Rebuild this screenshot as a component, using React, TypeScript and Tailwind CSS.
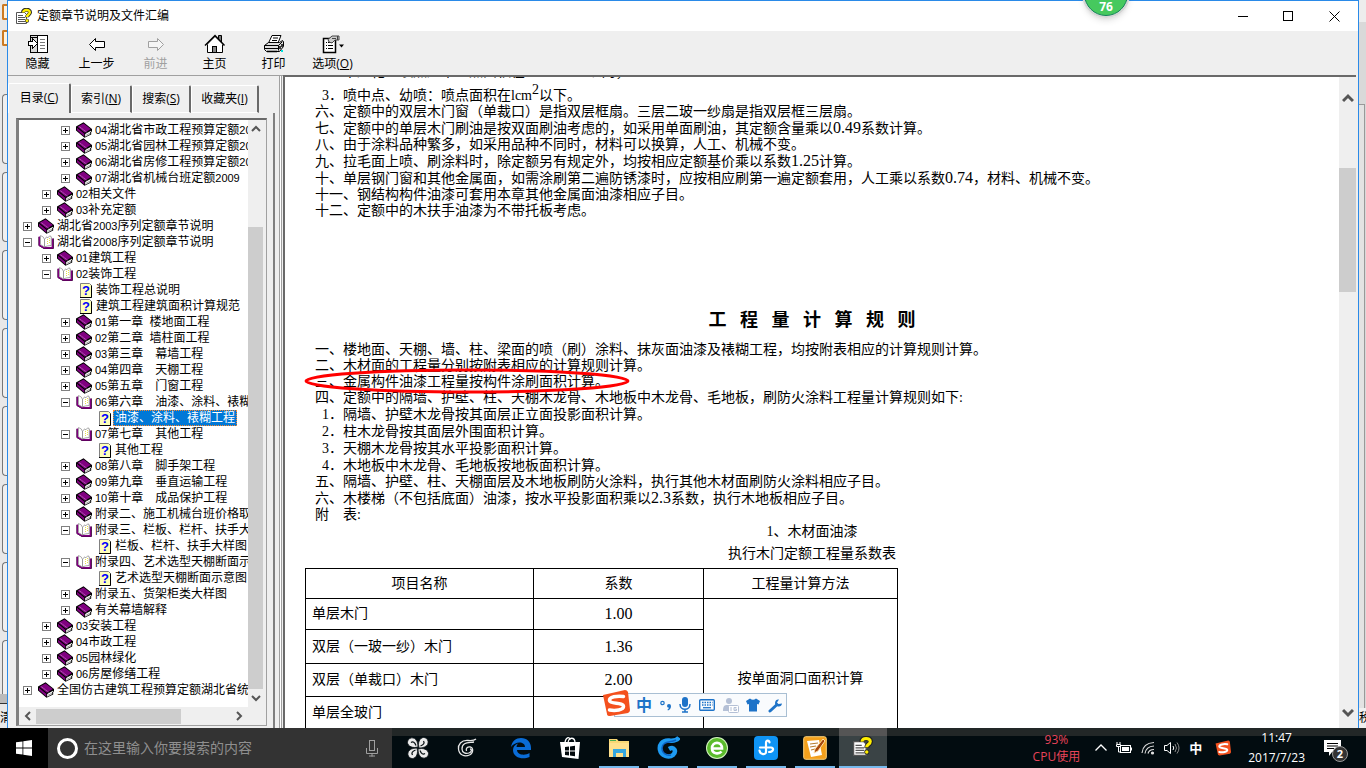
import React from "react";
import clsx from "clsx";

type NodeKind = "closed" | "open" | "page";

interface TreeNode {
  level: number;
  kind: NodeKind;
  label: string;
  selected?: boolean;
}

interface DocLine {
  text: string;
  tall?: boolean;
  sub?: boolean;
}

const tree: TreeNode[] = [
  { level: 2, kind: "closed", label: "04湖北省市政工程预算定额2008" },
  { level: 2, kind: "closed", label: "05湖北省园林工程预算定额2008" },
  { level: 2, kind: "closed", label: "06湖北省房修工程预算定额2008" },
  { level: 2, kind: "closed", label: "07湖北省机械台班定额2009" },
  { level: 1, kind: "closed", label: "02相关文件" },
  { level: 1, kind: "closed", label: "03补充定额" },
  { level: 0, kind: "closed", label: "湖北省2003序列定额章节说明" },
  { level: 0, kind: "open", label: "湖北省2008序列定额章节说明" },
  { level: 1, kind: "closed", label: "01建筑工程" },
  { level: 1, kind: "open", label: "02装饰工程" },
  { level: 2, kind: "page", label: "装饰工程总说明" },
  { level: 2, kind: "page", label: "建筑工程建筑面积计算规范" },
  { level: 2, kind: "closed", label: "01第一章\u00a0\u00a0楼地面工程" },
  { level: 2, kind: "closed", label: "02第二章\u00a0\u00a0墙柱面工程" },
  { level: 2, kind: "closed", label: "03第三章　幕墙工程" },
  { level: 2, kind: "closed", label: "04第四章　天棚工程" },
  { level: 2, kind: "closed", label: "05第五章　门窗工程" },
  { level: 2, kind: "open", label: "06第六章　油漆、涂料、裱糊工程" },
  { level: 3, kind: "page", label: "油漆、涂料、裱糊工程", selected: true },
  { level: 2, kind: "open", label: "07第七章　其他工程" },
  { level: 3, kind: "page", label: "其他工程" },
  { level: 2, kind: "closed", label: "08第八章　脚手架工程" },
  { level: 2, kind: "closed", label: "09第九章　垂直运输工程" },
  { level: 2, kind: "closed", label: "10第十章　成品保护工程" },
  { level: 2, kind: "closed", label: "附录二、施工机械台班价格取定表" },
  { level: 2, kind: "open", label: "附录三、栏板、栏杆、扶手大样图" },
  { level: 3, kind: "page", label: "栏板、栏杆、扶手大样图" },
  { level: 2, kind: "open", label: "附录四、艺术选型天棚断面示意图" },
  { level: 3, kind: "page", label: "艺术选型天棚断面示意图" },
  { level: 2, kind: "closed", label: "附录五、货架柜类大样图" },
  { level: 2, kind: "closed", label: "有关幕墙解释" },
  { level: 1, kind: "closed", label: "03安装工程" },
  { level: 1, kind: "closed", label: "04市政工程" },
  { level: 1, kind: "closed", label: "05园林绿化" },
  { level: 1, kind: "closed", label: "06房屋修缮工程" },
  { level: 0, kind: "closed", label: "全国仿古建筑工程预算定额湖北省统一基价表" },
];

const folderIndent = ["pl-1", "pl-[23px]", "pl-[42px]"];
const pageIndent = ["pl-[23px]", "pl-[42px]", "pl-[61px]", "pl-[80px]"];

const notes: DocLine[] = [
  { text: "3．喷中点、幼喷：喷点面积在lcm^以下。", tall: true, sub: true },
  { text: "六、定额中的双层木门窗（单裁口）是指双层框扇。三层二玻一纱扇是指双层框三层扇。" },
  { text: "七、定额中的单层木门刷油是按双面刷油考虑的，如采用单面刷油，其定额含量乘以0.49系数计算。", tall: true },
  { text: "八、由于涂料品种繁多，如采用品种不同时，材料可以换算，人工、机械不变。" },
  { text: "九、拉毛面上喷、刷涂料时，除定额另有规定外，均按相应定额基价乘以系数1.25计算。", tall: true },
  { text: "十、单层钢门窗和其他金属面，如需涂刷第二遍防锈漆时，应按相应刷第一遍定额套用，人工乘以系数0.74，材料、机械不变。", tall: true },
  { text: "十一、钢结构构件油漆可套用本章其他金属面油漆相应子目。" },
  { text: "十二、定额中的木扶手油漆为不带托板考虑。" },
];

const rulesBefore: DocLine[] = [
  { text: "一、楼地面、天棚、墙、柱、梁面的喷（刷）涂料、抹灰面油漆及裱糊工程，均按附表相应的计算规则计算。" },
  { text: "二、木材面的工程量分别按附表相应的计算规则计算。" },
];

const rulesAfter: DocLine[] = [
  { text: "四、定额中的隔墙、护壁、柱、天棚木龙骨、木地板中木龙骨、毛地板，刷防火涂料工程量计算规则如下:" },
  { text: "1．隔墙、护壁木龙骨按其面层正立面投影面积计算。", tall: true, sub: true },
  { text: "2．柱木龙骨按其面层外围面积计算。", tall: true, sub: true },
  { text: "3．天棚木龙骨按其水平投影面积计算。", tall: true, sub: true },
  { text: "4．木地板中木龙骨、毛地板按地板面积计算。", tall: true, sub: true },
  { text: "五、隔墙、护壁、柱、天棚面层及木地板刷防火涂料，执行其他木材面刷防火涂料相应子目。" },
  { text: "六、木楼梯（不包括底面）油漆，按水平投影面积乘以2.3系数，执行木地板相应子目。", tall: true },
  { text: "附　表:" },
];

const ClosedBook = () => (
  <svg width="16" height="16" viewBox="0 0 16 16" className="shrink-0">
    <path d="M0 4.500 7.500.3 16 7v2.200l-.8.800v2.400L8.500 15.700 0 8.500Z" fill="#000" />
    <path d="M1.500 4.700 7.500 1.400 14.800 7 8.800 10.800Z" fill="#800080" />
    <path d="M1 5.800l7.300 6v2.700L1 8.200Z" fill="#800080" />
    <path d="M9.200 12 15 8.700v.8l-1 .9.300 1.600-5.100 2.700Z" fill="#fff" />
    <path d="M10 13.300l4-2.200" stroke="#888" strokeWidth=".8" fill="none" />
    <path d="M3.500 4.800l7 5.300" stroke="#d8a0d8" strokeWidth=".8" strokeDasharray="1.500 1" fill="none" />
  </svg>
);

const OpenBook = () => (
  <svg width="16" height="16" viewBox="0 0 16 16" className="shrink-0">
    <path d="M1 3v8.500L6 14.500h9.300V4.500" fill="none" stroke="#000" strokeWidth="1" />
    <path d="M1.500 2.500v8.700l4.800 2.600h8.200V4.500" fill="none" stroke="#800080" strokeWidth="1.800" />
    <path d="M2.500 1.500q3.500 1 4 4v7.500l-4-2.500Z" fill="#fff" stroke="#999" strokeWidth=".8" />
    <path d="M6.500 12.800V5l2.300-2 1 .8 2-2 1.500 1v8.700l-3.500.4Z" fill="#fff" stroke="#888" strokeWidth=".8" />
    <path d="M9.500 5v6M11.500 4v6" stroke="#e8e04a" strokeWidth="1" strokeDasharray="1 1" />
  </svg>
);

const HelpPage = () => (
  <svg width="12" height="15" viewBox="0 0 12 15" className="shrink-0">
    <path d="M.5.5h9l2 2v12H.5Z" fill="#ffffb8" stroke="#808080" />
    <path d="M11.500 2.500v12H0" fill="none" stroke="#000" />
    <text x="6" y="12" textAnchor="middle" fontSize="13" fontWeight="700" fill="#0000ff" fontFamily="Liberation Sans, sans-serif">?</text>
  </svg>
);

const Expander = ({ open }: { open: boolean }) => (
  <svg width="9" height="9" viewBox="0 0 9 9" shapeRendering="crispEdges" className="mr-1 shrink-0">
    <rect x=".5" y=".5" width="8" height="8" fill="#fff" stroke="#808080" />
    <path d={open ? "M2 4.500h5" : "M2 4.500h5M4.500 2v5"} stroke="#000" />
  </svg>
);

const HelpFile = ({ size }: { size: number }) => (
  <svg width={size} height={size} viewBox="0 0 16 16" className="shrink-0">
    <path d="M.5 4.500h8l2 2v9H.5Z" fill="#fff" stroke="#555" />
    <path d="M2 7.500h5M2 9.500h7M2 11.500h7M2 13.500h7" stroke="#555" />
    <path d="M7 4.500C7 1 14 .8 14 4.300c0 2.500-3 2.400-3 5" fill="none" stroke="#222" strokeWidth="4" />
    <path d="M7.300 4.500C7 1.300 13.700 1 13.800 4.300c0 2.500-2.900 2.400-2.900 4.600" fill="none" stroke="#ffee00" strokeWidth="2.500" />
    <circle cx="11" cy="12.700" r="2" fill="#222" />
    <circle cx="11" cy="12.700" r="1.400" fill="#ffee00" />
  </svg>
);

const Chevron = ({ dir }: { dir: "up" | "down" | "left" | "right" }) => {
  const d = {
    up: "M1 7l4-4 4 4",
    down: "M1 3l4 4 4-4",
    left: "M7 1 3 5l4 4",
    right: "M3 1l4 4-4 4",
  }[dir];
  return (
    <svg width="10" height="10" viewBox="0 0 10 10" fill="none" stroke="#555" strokeWidth="2" className="shrink-0">
      <path d={d} />
    </svg>
  );
};

const toolbar = [
  {
    label: "隐藏",
    icon: (
      <g shapeRendering="crispEdges">
        <rect x="3.500" y="1.500" width="17" height="17" fill="#fff" stroke="#000" />
        <path d="M4 2h6v16H4Z" fill="#d8d8d8" />
        <path d="M10.500 2v16M4 3.500h6" stroke="#000" />
        <path d="M13 5.500h5M13 8.500h5M13 11.500h5M13 14.500h5" stroke="#777" />
        <path d="M1.500 7.500h4v-3l5 5-5 5v-3h-4Z" fill="#fff" stroke="#000" />
      </g>
    ),
  },
  {
    label: "上一步",
    icon: <path d="M3.500 10.500l6-6v3h9v6h-9v3Z" fill="#fff" stroke="#000" />,
  },
  {
    label: "前进",
    disabled: true,
    icon: <path d="M18.500 10.500l-6-6v3h-9v6h9v3Z" fill="#f6f6f6" stroke="#a0a0a0" />,
  },
  {
    label: "主页",
    icon: (
      <g>
        <path d="M14.500 5V1.500h3V8" fill="#777" stroke="#000" />
        <path d="M3.500 10v8.500h15V10L11 2Z" fill="#fff" stroke="#000" />
        <path d="M1 11.500 11 1.500l9.500 10" fill="none" stroke="#000" strokeWidth="1.500" />
        <path d="M3.500 10.500 11 3l7.500 7.500" fill="none" stroke="#888" />
        <rect x="8.500" y="12.500" width="4" height="6" fill="#888" stroke="#000" />
      </g>
    ),
  },
  {
    label: "打印",
    icon: (
      <g>
        <path d="M5.500 9 9 1.500h9L15 9Z" fill="#fff" stroke="#000" />
        <path d="M10 4h5M9 6.500h5" stroke="#000" />
        <path d="M1.500 11.500l4-3h11l3-2 1 1v5l-4 5h-13l-2-2Z" fill="#ddd" stroke="#000" />
        <path d="M1.500 11.500h14v5M15.500 11.500l4-4M2 14.500h13" fill="none" stroke="#000" />
        <path d="M4 17.500h10M17 12v3M19 10v3" stroke="#000" strokeWidth="1.500" />
        <path d="M18 17h2" stroke="#00e0e0" strokeWidth="2" />
      </g>
    ),
  },
  {
    label: "选项",
    hotkey: "O",
    icon: (
      <g>
        <rect x="1.500" y="4.500" width="12" height="14" fill="#fff" stroke="#000" strokeWidth="1.500" />
        <path d="M4 8.500h1M6 8.500h5M4 11.500h1M6 11.500h5M4 14.500h1M6 14.500h5" stroke="#000" />
        <path d="M6 5.500 10 2h7v4h-4l-3 3-3-1Z" fill="#ccc" stroke="#444" />
        <path d="M10 4.500h4M15.500 2v4" stroke="#444" />
        <path d="M17 10.500h5l-2.500 3Z" fill="#000" />
      </g>
    ),
  },
];

// Decimals are set a little larger than the body, "^" stands for a raised 2
const withNumbers = (text: string) =>
  text.split(/(\d\.\d+|\^)/).map((part, i) => {
    if (part === "^") {
      return (
        <span key={i} className="inline-block -translate-y-1.5">
          2
        </span>
      );
    }
    if (/^\d\.\d+$/.test(part)) {
      return (
        <span key={i} className="text-base leading-none">
          {part}
        </span>
      );
    }
    return part;
  });

const Lines = ({ lines }: { lines: DocLine[] }) => (
  <>
    {lines.map((line, i) => (
      <p
        key={i}
        className={clsx("whitespace-nowrap", line.tall ? "h-[17px] leading-[17px]" : "h-4 leading-4", line.sub && "pl-[7px]")}
      >
        {withNumbers(line.text)}
      </p>
    ))}
  </>
);

const TitleBar = () => (
  <header className="flex h-[30px] shrink-0 items-center bg-white pl-2">
    <HelpFile size={16} />
    <h1 className="ml-[5px] flex-1 text-xs">定额章节说明及文件汇编</h1>
    <button aria-label="最小化" className="flex h-full w-[45px] items-center justify-center">
      <span className="h-px w-2.5 bg-black" />
    </button>
    <button aria-label="最大化" className="flex h-full w-[45px] items-center justify-center">
      <span className="size-2.5 border border-black" />
    </button>
    <button aria-label="关闭" className="flex h-full w-12 items-center justify-center">
      <svg width="11" height="11" viewBox="0 0 11 11" stroke="#000">
        <path d="M.5.5l10 10M10.500.5l-10 10" />
      </svg>
    </button>
  </header>
);

const Toolbar = () => (
  <nav className="flex h-11 shrink-0 bg-[#efefef]">
    {toolbar.map((item) => (
      <button
        key={item.label}
        disabled={item.disabled}
        className={clsx("flex w-[59px] flex-col items-center pt-[3px] text-xs leading-[18px]", item.disabled && "text-[#a0a0a0]")}
      >
        <svg width="22" height="20" viewBox="0 0 22 20" className="mb-px shrink-0">
          {item.icon}
        </svg>
        <span className="whitespace-nowrap">
          {item.label}
          {item.hotkey && (
            <>
              (<u>{item.hotkey}</u>)
            </>
          )}
        </span>
      </button>
    ))}
  </nav>
);

const Tab = ({ label, hotkey, active, width }: { label: string; hotkey: string; active?: boolean; width: string }) => (
  <button
    role="tab"
    aria-selected={!!active}
    className={clsx(
      "rounded-t-xs border-t border-r-2 border-l border-t-white border-r-[#696969] border-l-white text-xs whitespace-nowrap",
      width,
      active ? "h-[30px] pb-0.5" : "h-7 border-b border-b-white"
    )}
  >
    {label}(<u>{hotkey}</u>)
  </button>
);

const TreeItem = ({ node }: { node: TreeNode }) => {
  const isPage = node.kind === "page";
  return (
    <li className={clsx("flex h-4 items-center gap-0.5", isPage ? pageIndent[node.level] : folderIndent[node.level])}>
      {!isPage && <Expander open={node.kind === "open"} />}
      {node.kind === "closed" && <ClosedBook />}
      {node.kind === "open" && <OpenBook />}
      {isPage && <HelpPage />}
      <button
        className={clsx(
          "h-4 shrink-0 border text-xs leading-[14px] whitespace-nowrap",
          isPage ? "px-px" : "pr-px",
          node.selected ? "border-dotted border-[#ff8728] bg-[#0078d7] text-white" : "border-transparent"
        )}
      >
        {node.label.split(/(\d+)/).map((part, i) =>
          /^\d+$/.test(part) ? (
            <span key={i} className="font-['Liberation_Sans',sans-serif] text-[11px]">
              {part}
            </span>
          ) : (
            part
          )
        )}
      </button>
    </li>
  );
};

const Sidebar = () => (
  <aside className="flex w-[271px] shrink-0 flex-col bg-[#efefef] pt-[7px]">
    <div role="tablist" className="flex items-end">
      <Tab label="目录" hotkey="C" active width="w-[63px]" />
      <Tab label="索引" hotkey="N" width="w-[61px]" />
      <Tab label="搜索" hotkey="S" width="w-[59px]" />
      <Tab label="收藏夹" hotkey="I" width="w-[68px]" />
    </div>
    <div className="mr-1 flex min-h-0 flex-1 border-r-2 border-[#808080] pt-[5px] pr-1.5 pb-0.5 pl-2">
      <div className="flex min-h-0 min-w-0 flex-1 flex-col border-t-2 border-r border-b border-l-3 border-t-[#696969] border-r-[#a0a0a0] border-b-[#a0a0a0] border-l-[#808080] bg-white">
        <div className="flex min-h-0 min-w-0 flex-1">
          <ul className="min-w-0 flex-1 overflow-hidden pt-0.5">
            {tree.map((node) => (
              <TreeItem key={node.level + node.label} node={node} />
            ))}
          </ul>
          <div className="flex w-[15px] shrink-0 flex-col items-center bg-[#efefef]">
            <div className="pt-1">
              <Chevron dir="up" />
            </div>
            <div className="mt-[93px] min-h-0 w-full flex-1 bg-[#cdcdcd]" />
            <div className="py-1">
              <Chevron dir="down" />
            </div>
          </div>
          <div className="w-[3px] shrink-0 bg-[#efefef]" />
        </div>
        <div className="flex h-[18px] shrink-0 items-center bg-[#efefef] pr-[22px] pl-1">
          <Chevron dir="left" />
          <div className="ml-[3px] h-[15px] w-[145px] bg-[#cdcdcd]" />
          <div className="flex-1" />
          <Chevron dir="right" />
        </div>
      </div>
    </div>
  </aside>
);

const cell = "border border-black px-1.5 font-normal";
const numberCell = "border border-black px-1.5 text-center text-base leading-4";

const CoefficientTable = () => (
  <table className="mt-[5px] ml-5 w-[592px] table-fixed border-collapse leading-4">
    <colgroup>
      <col className="w-[228px]" />
      <col className="w-[170px]" />
      <col className="w-[194px]" />
    </colgroup>
    <thead>
      <tr className="h-[30px]">
        <th className={cell}>项目名称</th>
        <th className={cell}>系数</th>
        <th className={cell}>工程量计算方法</th>
      </tr>
    </thead>
    <tbody>
      <tr className="h-[31px]">
        <td className={cell}>单层木门</td>
        <td className={numberCell}>1.00</td>
        <td className={clsx(cell, "text-center")} rowSpan={5}>
          按单面洞口面积计算
        </td>
      </tr>
      <tr className="h-[34px]">
        <td className={cell}>双层（一玻一纱）木门</td>
        <td className={numberCell}>1.36</td>
      </tr>
      <tr className="h-[33px]">
        <td className={cell}>双层（单裁口）木门</td>
        <td className={numberCell}>2.00</td>
      </tr>
      <tr className="h-8">
        <td className={cell}>单层全玻门</td>
        <td className={cell} />
      </tr>
      <tr className="h-[30px]">
        <td className={cell} />
        <td className={cell} />
      </tr>
    </tbody>
  </table>
);

const Article = () => (
  <article className="min-w-0 flex-1 overflow-hidden bg-white font-['Liberation_Serif','Noto_Sans_CJK_SC',serif] text-sm">
    <div className="mb-[7px] flex h-[3px] items-end overflow-hidden pl-[37px]">
      <p className="h-4 shrink-0 leading-4 whitespace-nowrap">2．中压花：喷点压平、点面积在1～1.2cm2以内；</p>
    </div>
    <section className="pl-[30px]">
      <Lines lines={notes} />
    </section>
    <h2 className="mt-[89px] mb-[10px] text-center text-lg leading-6 font-bold">
      {"工程量计算规则".split("").join("\u00a0\u00a0\u00a0")}
    </h2>
    <section className="pl-[30px]">
      <Lines lines={rulesBefore} />
      <div className="relative">
        <Lines lines={[{ text: "三、金属构件油漆工程量按构件涂刷面积计算。" }]} />
        <svg width="328" height="26" viewBox="0 0 328 26" className="absolute -top-1.5 -left-3">
          <ellipse cx="164" cy="13" rx="161" ry="11" fill="none" stroke="#f00" strokeWidth="3" />
        </svg>
      </div>
      <Lines lines={rulesAfter} />
    </section>
    <p className="text-center leading-[18px]">1、木材面油漆</p>
    <p className="mt-1 text-center leading-[18px]">执行木门定额工程量系数表</p>
    <CoefficientTable />
  </article>
);

const SogouMark = ({ size }: { size: number }) => (
  <svg width={size} height={size} viewBox="0 0 28 28" className="shrink-0">
    <path d="M1 6 23 1q2 0 3 2l2 18q0 2-2 3L8 27q-3 0-3-2Z" fill="#f4511e" />
    <path d="M21.500 7.500C15 6.500 7 8 7.500 11.500c.5 4 14 1.500 14 6 0 3.500-8 4.500-14 3.500" fill="none" stroke="#fff" strokeWidth="3.500" strokeLinecap="round" />
  </svg>
);

const ImeBar = () => (
  <div className="absolute bottom-[51px] left-[602px] flex h-6 w-[185px] items-center">
    <div className="absolute inset-y-0 right-0 left-3 border border-[#a9bfd3] bg-[#f9fbfd]" />
    <div className="relative -mt-1 flex">
      <SogouMark size={28} />
    </div>
    <div className="relative flex flex-1 items-center justify-between pr-1 pl-1.5 text-[#1e73c8]">
      <span className="text-base leading-5 font-bold">中</span>
      <svg width="12" height="14" viewBox="0 0 12 14">
        <circle cx="2.500" cy="5" r="1.700" fill="none" stroke="currentColor" strokeWidth="1.200" />
        <path d="M7 8a2 2 0 1 1 4 0q0 3-3 4.500l-.6-.8q1.400-.9 1.500-2Q7 9.500 7 8Z" fill="currentColor" />
      </svg>
      <svg width="12" height="16" viewBox="0 0 12 16">
        <rect x="3" y="0" width="6" height="10" rx="3" fill="currentColor" />
        <path d="M1 7c0 7 10 7 10 0M6 12v3M3 15h6" fill="none" stroke="currentColor" strokeWidth="1.500" />
      </svg>
      <svg width="16" height="12" viewBox="0 0 16 12">
        <rect x=".7" y=".7" width="14.600" height="10.600" rx="1" fill="none" stroke="currentColor" strokeWidth="1.400" />
        <path d="M3 3.500h10.500M3 6h10.500" stroke="currentColor" strokeWidth="1.300" strokeDasharray="1.500 1" />
        <path d="M4 8.700h8" stroke="currentColor" strokeWidth="1.300" />
      </svg>
      <svg width="16" height="16" viewBox="0 0 16 16">
        <circle cx="6" cy="4" r="3" fill="#b4c0d6" />
        <path d="M0 14c0-7 3-6 6-6s4 1 4 6Z" fill="#b4c0d6" />
        <rect x="5.500" y="8.500" width="10" height="7" rx="1" fill="#fff" stroke="#b4c0d6" />
        <path d="M8 10v4M13.500 10.500h-2.500v3h2.500v-1.500h-2" fill="none" stroke="#b4c0d6" />
      </svg>
      <svg width="14" height="14" viewBox="0 0 14 14">
        <path d="M0 3 4 .5q3 2.500 6 0L14 3l-1.500 3.500L11 6v7.500H3V6l-1.500.5Z" fill="currentColor" />
      </svg>
      <svg width="15" height="15" viewBox="0 0 15 15">
        <path d="M2 13 8 7.500" stroke="currentColor" strokeWidth="3" strokeLinecap="round" />
        <path d="M11 1.500a3.500 3.500 0 1 0 3 4L10.500 6 9 4.500Z" fill="currentColor" />
      </svg>
    </div>
  </div>
);

const taskIcons = [
  {
    name: "搜狗",
    icon: (
      <g fill="#ececec" stroke="#0a1215" strokeWidth=".8">
        <path d="M12 11C12 2 6 0 2.500 3.500c-3 4 1 8 6 8Z" />
        <path d="M13 12C22 12 24 6 20.500 2.500c-4-3-8 1-8 6Z" />
        <path d="M12 13c0 9 6 11 9.500 7.500 3-4-1-8-6-8Z" />
        <path d="M11 12C2 12 0 18 3.500 21.500c4 3 8-1 8-6Z" />
        <path d="M5 6.500q3-2 5 3M17.500 5q2 3-3 5M19 17.500q-3 2-5-3M6.500 19q-2-3 3-5" fill="none" strokeWidth="1.300" />
      </g>
    ),
  },
  {
    name: "GLodon",
    icon: (
      <g fill="none" stroke="#e6e6e6" strokeWidth="1.300">
        <path d="M21 3q-2 2-8 1.500C6 4 3 9 3.500 13c.5 6 6 8 11 6 4-2 4-7 1-8-3-.5-5 1-4 4" />
        <path d="M19 6c-6 1-12 0-12 7 0 4 4 5 7 4 3-1 3-4 1-4" />
      </g>
    ),
  },
  {
    name: "Edge",
    gap: true,
    icon: (
      <path d="M2 11C3 5 7 2 12 2c6 0 10 4 10 10v2H8c0 5 8 6 12.500 3v4C14 24 4 22 4 14c0-3 2-5.500 5-6.500Q7.500 9 7.500 11H16c0-6-10-6-14 0Z" fill="#0a6cd6" />
    ),
  },
  {
    name: "应用商店",
    icon: (
      <g>
        <path d="M7 8C7 1 12 0 12 4M10 8c0-8 7-7 7-1" fill="none" stroke="#fff" strokeWidth="1.300" />
        <path d="M2 6h20l-1.500 17L4 21Z" fill="#fff" />
        <path d="M7 11l4-.5v4H7Zm5-.6 5-.6v4.700h-5ZM7 15.500h4v4l-4-.5Zm5 0h5v4.700l-5-.6Z" fill="#02090c" />
      </g>
    ),
  },
  {
    name: "文件资源管理器",
    running: true,
    icon: (
      <g>
        <path d="M2 3h8l1.500 2H22v16H2Z" fill="#f8d775" />
        <path d="M3 4h6v1H3Z" fill="#4caf50" />
        <path d="M2 7h20v14H2Z" fill="#ffe08c" />
        <path d="M6 13h13v8h-3v-4H9v4H6Z" fill="#35a7e0" />
      </g>
    ),
  },
  {
    name: "广联达",
    running: true,
    icon: (
      <g fill="none">
        <path d="M23 1.500q-3 4-10 3C6 4 3 9 4 14c1 6 9 8 13 5 4-4 1-9-4-6" stroke="#1e9bf2" strokeWidth="4.500" />
        <path d="M20 4c-7 3-13 1-14 8 0 5 4 8 9 7" stroke="#0c62c4" strokeWidth="1.500" />
      </g>
    ),
  },
  {
    name: "浏览器",
    running: true,
    icon: (
      <g>
        <circle cx="12" cy="12" r="11" fill="#d4f3c0" />
        <circle cx="12" cy="12" r="10" fill="#5bbb2c" />
        <path d="M6.500 12.500H17C17 5 7 5 7 12.500c0 5.500 7 6 9.500 3" fill="none" stroke="#fff" strokeWidth="2.600" />
      </g>
    ),
  },
  {
    name: "云助手",
    running: true,
    icon: (
      <g>
        <rect width="24" height="24" rx="4" fill="#0f94f5" />
        <path d="M15.500 6.500C15.500 4 12 4 12 7v9c0 3-6 3-6.500-1.500M6 11.500h11c3 0 3 4.500-2 4.500" fill="none" stroke="#fff" strokeWidth="2.200" strokeLinecap="round" />
      </g>
    ),
  },
  {
    name: "计价软件",
    running: true,
    icon: (
      <g>
        <rect x=".7" y=".7" width="22.600" height="22.600" rx="2" fill="#f4a01c" stroke="#ffd27a" />
        <path d="M4 5l12-1 3 15-11 2Z" fill="#fff" />
        <path d="M7 8l8-1M7 11l6-1M8 14l4-1" stroke="#b67a2a" />
        <path d="M20 3l-8 10-1 4 4-2 7-10Z" fill="#a8480c" stroke="#ffe0a8" />
      </g>
    ),
  },
];

const TaskBar = () => (
  <footer className="flex h-10 shrink-0 bg-[#020c10] text-white">
    <button aria-label="开始" className="flex w-12 items-center justify-center bg-black">
      <svg width="16" height="16" viewBox="0 0 16 16" fill="#fff">
        <path d="M0 2.300 6.500 1.400v6.200H0ZM7.300 1.300 16 0v7.600H7.300ZM0 8.400h6.500v6.200L0 13.700ZM7.300 8.400H16V16l-8.700-1.300Z" />
      </svg>
    </button>
    <label className="flex w-[344px] items-center bg-[#333] pl-[9px]">
      <span className="size-[21px] rounded-full border-3 border-white" />
      <input
        aria-label="搜索"
        placeholder="在这里输入你要搜索的内容"
        className="ml-1.5 min-w-0 flex-1 text-sm outline-none placeholder:text-[#8f8f8f]"
      />
      <svg width="12" height="18" viewBox="0 0 12 18" fill="none" stroke="#a0a0a0" className="mr-3.5">
        <rect x="3.500" y="1.500" width="5" height="10" />
        <path d="M.5 9v5.500h11V9M6 14.500v3M3 17h6" />
      </svg>
    </label>
    <div className="flex flex-1 border-t-8 border-[#222727] pl-px">
      {taskIcons.map((item) => (
        <button
          key={item.name}
          aria-label={item.name}
          className={clsx("-mt-2 flex h-10 w-[49px] flex-col items-center", item.gap && "ml-[5px]")}
        >
          <svg width="24" height="24" viewBox="0 0 24 24" className="mt-2">
            {item.icon}
          </svg>
          {item.running && <span className="mt-auto h-0.5 w-10 bg-[#76b9ed]" />}
        </button>
      ))}
      <button aria-label="帮助" className="-mt-2 flex h-10 w-12 flex-col items-center border-t-8 border-[#555] bg-[#3a4345]">
        <HelpFile size={20} />
        <span className="mt-auto h-0.5 w-full bg-[#76b9ed]" />
      </button>
      <div className="-mt-2 ml-auto flex items-center gap-[9px] pr-[18px]">
        <p className="mr-1.5 text-center text-xs leading-[17px] text-[#e8445a]">
          93%
          <br />
          CPU使用
        </p>
        <svg width="12" height="8" viewBox="0 0 12 8" fill="none" stroke="#fff" strokeWidth="1.300">
          <path d="M.5 6.500 6 1l5.500 5.500" />
        </svg>
        <svg width="16" height="12" viewBox="0 0 16 12" fill="none" stroke="#fff">
          <rect x="4.500" y="3.500" width="10" height="7" />
          <path d="M6 5h7v4H6Z" fill="#fff" stroke="none" />
          <path d="M15.500 5.500v3M1 0v2M4 0v2M.5 2.500h4v2h-4ZM2.500 5v5H4" />
        </svg>
        <svg width="14" height="14" viewBox="0 0 14 14" fill="none" stroke="#ddd" strokeWidth="1.200">
          <path d="M1 12Q2 2 13 1.500M4 12.500Q5 5.500 13 5M7 12.500q1-4 6-4" />
          <circle cx="11.500" cy="12" r="1" fill="#fff" />
        </svg>
        <svg width="16" height="14" viewBox="0 0 16 14" fill="none" stroke="#fff">
          <path d="M.5 4.500H3l3.500-3v11L3 9.500H.5Z" />
          <path d="M9 5q1.500 2 0 4" />
          <path d="M11 3q3 4 0 8M13 1.500q4 5.500 0 11" stroke="#888" />
        </svg>
        <span className="text-[13px] leading-4 font-bold">中</span>
        <span className="ml-1">
          <SogouMark size={16} />
        </span>
        <p className="ml-2 text-center text-xs leading-5">
          11:47
          <br />
          2017/7/23
        </p>
        <button aria-label="通知" className="relative ml-2.5 flex h-10 w-6 items-center">
          <svg width="17" height="16" viewBox="0 0 17 16">
            <path d="M0 0h17v12h-9l-3 4v-4H0Z" fill="#fff" />
            <path d="M3 3.500h11M3 6h11M3 8.500h7" stroke="#000" />
          </svg>
          <span className="absolute right-0 bottom-1.5 size-4 rounded-full border border-[#999] bg-[#333] text-[11px] leading-[14px] font-bold">
            2
          </span>
        </button>
      </div>
    </div>
  </footer>
);

// Slivers of the window behind, visible on both sides
const BackLeft = () => (
  <div className="flex w-[7px] shrink-0 flex-col overflow-hidden bg-[#e8e8e8]">
    <div className="mt-1 ml-0.5 h-4 shrink-0 rounded-l-xs border-2 border-r-0 border-[#cc7a22] bg-[#fff3df]" />
    <div className="mt-2.5 ml-0.5 h-4 shrink-0 rounded-l-xs border-2 border-r-0 border-[#cc7a22] bg-[#fff3df]" />
    <div className="mt-12 flex min-h-0 flex-1 flex-col gap-2 overflow-hidden">
      {Array.from({ length: 8 }, (_, i) => (
        <div key={i} className="ml-0.5 h-[70px] shrink-0 rounded-l-sm border border-r-0 border-[#777] bg-[#f0f0f0]" />
      ))}
    </div>
    <div className="h-2.5 shrink-0 border-b border-[#333] bg-[#bbb]" />
    <div className="h-[24px] shrink-0 text-xs leading-7">清</div>
  </div>
);

const BackRight = () => (
  <div className="flex w-[7px] shrink-0 flex-col overflow-hidden bg-[#d9d9d9]">
    <div className="h-[22px] shrink-0 bg-[#ededed]" />
    <div className="mt-[82px] mr-px min-h-0 flex-1 border-t border-r border-[#999] bg-[#e3e3e3]" />
    <div className="h-5 shrink-0 bg-[#f0f0f0] text-xs leading-5">税</div>
  </div>
);

const App = () => {
  return (
    <div className="relative flex h-screen flex-col overflow-hidden bg-[#efefef] font-['Open_Sans','Noto_Sans_CJK_SC',sans-serif] text-black">
      <div className="flex min-h-0 flex-1">
        <BackLeft />
        <main className="flex min-w-0 flex-1 flex-col border border-b-0 border-[#2a8ae8]">
          <TitleBar />
          <Toolbar />
          <div className="flex min-h-0 flex-1 bg-[#efefef] pr-0.5">
            <div className="flex shrink-0 border-t border-[#a0a0a0]">
              <Sidebar />
              <div className="mr-px w-[3px] border-x border-[#a0a0a0] bg-white" />
            </div>
            <div className="flex min-w-0 flex-1 border-t-2 border-l-2 border-[#696969]">
              <Article />
              <div className="flex w-[17px] shrink-0 flex-col items-center bg-[#efefef]">
                <div className="pt-4">
                  <svg width="12" height="10" viewBox="0 0 12 10" fill="none" stroke="#555" strokeWidth="3">
                    <path d="M1 8l5-5 5 5" />
                  </svg>
                </div>
                <div className="mt-[65px] h-[124px] w-full bg-[#cdcdcd]" />
                <div className="mt-auto pb-2.5">
                  <svg width="12" height="10" viewBox="0 0 12 10" fill="none" stroke="#555" strokeWidth="3">
                    <path d="M1 2l5 5 5-5" />
                  </svg>
                </div>
              </div>
            </div>
          </div>
        </main>
        <BackRight />
      </div>
      <TaskBar />
      <ImeBar />
      <div className="absolute -top-[30px] right-[236px] flex size-12 rounded-full border-2 border-[#d5d5d5] shadow-md">
        <div className="flex flex-1 items-end justify-center rounded-full border border-[#14805a] bg-[#46c95e] text-xs leading-4 font-bold text-white">
          76
        </div>
      </div>
    </div>
  );
};

export default App;
